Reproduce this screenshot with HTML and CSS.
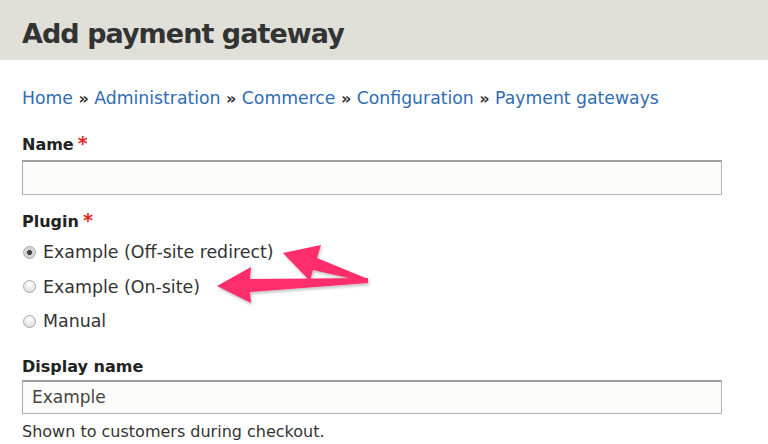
FILE: index.html
```html
<!DOCTYPE html>
<html>
<head>
<meta charset="utf-8">
<link rel="stylesheet" href="styles.css">
</head>
<body>
<header class="page-head">
  <h1 class="title">Add payment gateway</h1>
</header>
<main class="content">
  <nav class="crumbs">
    <a href="#">Home</a> <span class="sep">»</span> <a href="#">Administration</a> <span class="sep">»</span> <a href="#">Commerce</a> <span class="sep">»</span> <a href="#">Configuration</a> <span class="sep">»</span> <a href="#">Payment gateways</a>
  </nav>
  <form class="form">
    <div class="field">
      <label class="label">Name<span class="req">*</span></label>
      <input class="text" type="text">
    </div>
    <div class="field plugin">
      <div class="label">Plugin<span class="req">*</span></div>
      <label class="radio"><input type="radio" name="p" checked><span>Example (Off-site redirect)</span></label>
      <label class="radio"><input type="radio" name="p"><span>Example (On-site)</span></label>
      <label class="radio"><input type="radio" name="p"><span>Manual</span></label>
    </div>
    <div class="field display">
      <label class="label">Display name</label>
      <input class="text" type="text" value="Example">
      <div class="desc">Shown to customers during checkout.</div>
    </div>
  </form>
  <svg class="arrows" width="768" height="444" viewBox="0 0 768 444">
    <defs>
      <filter id="sh" x="-10%" y="-10%" width="130%" height="140%">
        <feDropShadow dx="1" dy="2" stdDeviation="1.5" flood-color="#000" flood-opacity="0.25"/>
      </filter>
    </defs>
    <g fill="#fe2d6c" filter="url(#sh)">
      <polygon points="283,253 321,245 317,258 368,279 366,282 313,270 310,281"/>
      <polygon points="217,286 251,267 250,279 368,278 368,283 250,292 251,303"/>
    </g>
  </svg>
</main>
</body>
</html>
```
FILE: styles.css
```css
html, body {
  margin: 0;
  padding: 0;
  background: #fff;
}
body {
  font-family: "DejaVu Sans", "Noto Sans", sans-serif;
  color: #333;
  width: 768px;
  height: 444px;
  overflow: hidden;
  position: relative;
}
.page-head {
  background: #e0dfd8;
  height: 60px;
  box-sizing: border-box;
  padding: 6px 22px 0;
  display: flex;
  align-items: center;
}
.title {
  margin: 0;
  font-size: 27px;
  font-weight: bold;
  color: #333;
  letter-spacing: -0.95px;
}
.content {
  padding: 0 22px;
}
.crumbs {
  margin-top: 27px;
  font-size: 17.25px;
  line-height: 22px;
  color: #333;
}
.crumbs a {
  color: #2f6cb3;
  text-decoration: none;
}
.crumbs .sep {
  font-size: 16px;
  font-weight: bold;
}
.form {
  margin-top: 24px;
}
.field {
  display: flex;
  flex-direction: column;
}
.label {
  font-weight: bold;
  font-size: 16px;
  line-height: 22px;
  color: #222;
}
.req {
  color: #e0261d;
  font-size: 19px;
  margin-left: 4px;
  vertical-align: top;
  line-height: 18px;
}
.text {
  box-sizing: border-box;
  width: 700px;
  height: 35px;
  margin: 4px 0 0;
  border: 1px solid #b4b4b4;
  border-top: 2px solid #9d9d9d;
  border-left-color: #a8a8a8;
  background: #fcfcfa;
  font-family: "DejaVu Sans", sans-serif;
  font-size: 17px;
  color: #444;
  padding: 0 9px;
  outline: none;
}
.plugin {
  margin-top: 16px;
}
.radio {
  display: flex;
  align-items: center;
  height: 34.5px;
  font-size: 17.4px;
  color: #333;
}
.plugin .label {
  margin-bottom: 2px;
}
.radio input {
  appearance: none;
  -webkit-appearance: none;
  margin: 0 7px 0 1px;
  width: 13px;
  height: 13px;
  border-radius: 50%;
  border: 1px solid #a9a9a9;
  background: radial-gradient(circle at 50% 30%, #fff 0%, #e8e8e8 60%, #d4d4d4 100%);
  box-sizing: border-box;
  position: relative;
}
.radio input:checked {
  background: radial-gradient(circle, #444 0 2.2px, #cfcfcf 2.8px, #e2e2e2 100%);
}
.display {
  margin-top: 17px;
}
.display .text {
  height: 34px;
  margin-top: 2px;
}
.desc {
  font-size: 16px;
  color: #333;
  margin-top: 8px;
  line-height: 20px;
}
.arrows {
  position: absolute;
  left: 0;
  top: 0;
  pointer-events: none;
}
```
